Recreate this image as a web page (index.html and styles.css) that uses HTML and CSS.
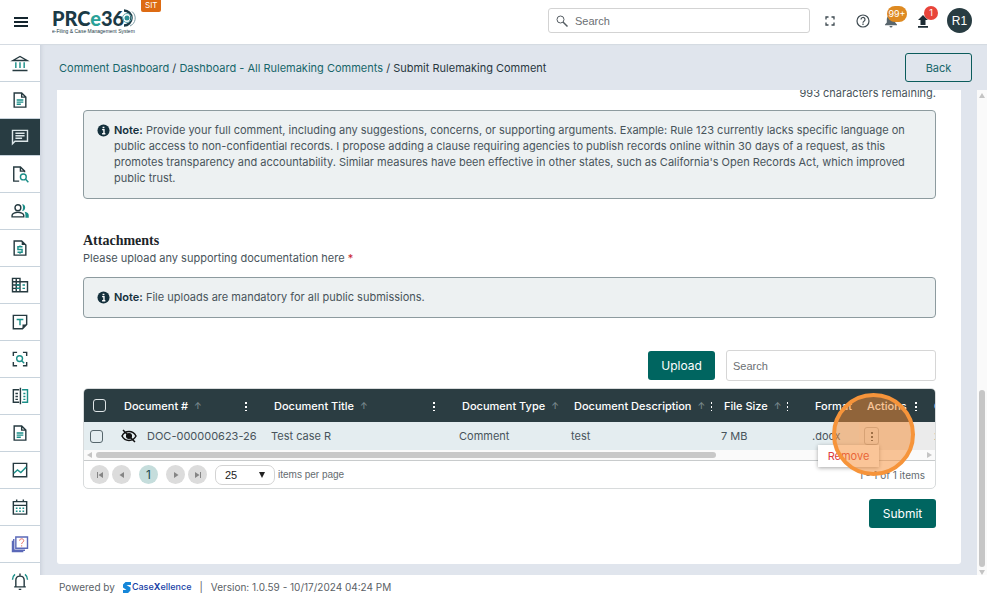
FILE: index.html
```
<!DOCTYPE html>
<html lang="en">
<head>
    <meta charset="UTF-8">
    <meta name="viewport" content="width=device-width, initial-scale=1.0">
    <title>Submit Rulemaking Comment</title>
    <link rel="stylesheet" href="styles.css">
</head>
<body>
    <header class="topbar">
        <button class="icon-btn menu-btn" aria-label="Menu">
            <svg width="14" height="12" viewBox="0 0 14 12"><path d="M0 2h14M0 6h14M0 10h14" stroke="#14252e" stroke-width="2"/></svg>
        </button>
        <a href="#" class="logo" aria-label="PRCe360 home">
            <svg width="84" height="36" viewBox="0 0 84 36">
                <text class="logo-name" x="0" y="22"><tspan>PRC</tspan><tspan class="logo-e">e</tspan><tspan>36</tspan></text>
                <g fill="none">
                    <path d="M72 6.500a7.500 7.500 0 1 1 0 15" stroke="#1b3a46" stroke-width="2.500"/>
                    <path d="M80 7.500a8.500 8.500 0 0 1-2 14.500" stroke="#7d9ca5" stroke-width="1"/>
                    <circle cx="75" cy="14" r="4.500" stroke="#5fa7ad" stroke-width="1"/>
                </g>
                <circle cx="75" cy="14" r="2.500" fill="#2b8f95"/>
                <text class="logo-sub" x="0" y="29">e-Filing &amp; Case Management System</text>
            </svg>
        </a>
        <span class="env">SIT</span>
        <label class="top-search">
            <svg width="12" height="12" viewBox="0 0 12 12" fill="none" stroke="#555d63"><circle cx="4.500" cy="4.500" r="3.500"/><path d="M7 7l4.500 4.500" stroke-width="1.500"/></svg>
            <input type="text" placeholder="Search" aria-label="Search">
        </label>
        <div class="tools">
            <button class="icon-btn" aria-label="Full screen">
                <svg width="10" height="10" viewBox="0 0 10 10" fill="none" stroke="#3f4b52" stroke-width="1.300"><path d="M1 3.500V1h2.500M6.500 1H9v2.500M9 6.500V9H6.500M3.500 9H1V6.500"/></svg>
            </button>
            <button class="icon-btn" aria-label="Help">
                <svg width="14" height="14" viewBox="0 0 14 14" fill="none" stroke="#3f4b52" stroke-width="1.200"><circle cx="7" cy="7" r="6"/><path d="M5 5.500a2 2 0 1 1 3 1.700c-.7.4-1 .7-1 1.500M7 9.500v1.500"/></svg>
            </button>
            <button class="icon-btn" aria-label="Notifications">
                <svg width="12" height="14" viewBox="0 0 12 14" fill="#59666d"><path d="M6 0a1 1 0 0 1 1 1.200c2 .5 3.200 2.200 3.200 4.300v3L12 10.500v.7H0v-.7l1.800-2v-3C1.800 3.400 3 1.700 5 1.200A1 1 0 0 1 6 0zM4.500 12h3a1.500 1.500 0 0 1-3 0z"/></svg>
                <span class="count count-orange">99+</span>
            </button>
            <button class="icon-btn" aria-label="Uploads">
                <svg width="12" height="14" viewBox="0 0 12 14" fill="#1c2b33"><path d="M6 1l5 5H8.500v5h-5V6H1zM1 12h10v1.700H1z"/></svg>
                <span class="count count-red">1</span>
            </button>
            <button class="avatar">R1</button>
        </div>
    </header>

    <div class="shell">
        <nav class="sidebar">
            <a href="#" aria-label="Home"><svg viewBox="0 0 24 24"><path class="d" d="M3.500 9L12 4.200 20.500 9zM3 21h18"/><path class="g" d="M7 11v7M12 11v7M17 11v7"/></svg></a>
            <a href="#" aria-label="Filings"><svg viewBox="0 0 24 24"><path class="d" d="M5 3.500h9l5 5v12H5zM14 3.500v5h5"/><path class="g" d="M8 12h8M8 14.500h8M8 17h5"/></svg></a>
            <a href="#" class="active" aria-label="Comments"><svg viewBox="0 0 24 24"><path d="M3 20V4h18v13H6z"/><path d="M6.500 7.500h11M6.500 10.500h11M6.500 13.500h8"/></svg></a>
            <a href="#" aria-label="Search documents"><svg viewBox="0 0 24 24"><path class="d" d="M11 20.500H4.500v-17h8l5 5V10M12.500 3.500v5h5"/><circle class="g" cx="16" cy="15.500" r="3.500"/><path class="g" d="M18.500 18l3.500 4"/></svg></a>
            <a href="#" aria-label="People"><svg viewBox="0 0 24 24"><circle class="d" cx="9.500" cy="8" r="3.500"/><path class="d" d="M2.500 19v-2c0-2 4-3.500 7-3.500s7 1.500 7 3.500v2z"/><path class="gf" d="M14.500 4c5 0 5 8 0 8 1.500-2 1.500-6 0-8zM17.500 13c3.500.7 5 2.200 5 4v3h-4v-3c0-1.700-.3-3-1-4z"/></svg></a>
            <a href="#" aria-label="Payments"><svg viewBox="0 0 24 24"><path class="d" d="M5 3.500h9l5 5v12H5z"/><path class="df" d="M14 3.500v5h5z"/><path class="g" d="M15 10.500H9.500v3.200h5V17H9M12 9v1.500M12 17v2"/></svg></a>
            <a href="#" aria-label="Companies"><svg viewBox="0 0 24 24"><path class="d" d="M3 4h9v16H3zM3 8h9M3 12h9M3 16h9M7.500 4v16M12 8h9v12h-9"/><path class="g" d="M7.500 12H12M7.500 16H12M15 12h3M15 16h3"/></svg></a>
            <a href="#" aria-label="Templates"><svg viewBox="0 0 24 24"><path class="d" d="M4 4h16v11l-5 5H4z"/><path class="df" d="M20 15h-5v5z"/><path class="g" d="M8 9h8M12 9v7"/></svg></a>
            <a href="#" aria-label="Scan"><svg viewBox="0 0 24 24"><path class="d" d="M4 8.500V4h4.500M15.500 4H20v4.500M20 15.500V20h-4.500M8.500 20H4v-4.500"/><circle class="g" cx="11.500" cy="11.500" r="3.500"/><path class="g" d="M14 14l3 3"/></svg></a>
            <a href="#" aria-label="Compare"><svg viewBox="0 0 24 24"><path class="d" d="M11 4.500H4v15h7M12.500 2v20M6.500 9h3M6.500 12.500h3M6.500 16h3"/><path class="g" d="M14.500 4.500H21v15h-6.500M16 9h2.500M16 12.500h2.500M16 16h2.500"/></svg></a>
            <a href="#" aria-label="Orders"><svg viewBox="0 0 24 24"><path class="d" d="M5 3.500h9l5 5v12H5zM14 3.500v5h5"/><path class="g" d="M8 12h8M8 14.500h8M8 17h5"/></svg></a>
            <a href="#" aria-label="Reports"><svg viewBox="0 0 24 24"><path class="d" d="M4 4h16v16H4z"/><path class="g" d="M4.500 16l4.500-4 4 3 6.500-6.500"/></svg></a>
            <a href="#" aria-label="Calendar"><svg viewBox="0 0 24 24"><path class="d" d="M4 5.500h16v15H4zM4 10h16M8 3v3M16 3v3"/><path class="g" stroke-dasharray="2 2" d="M7 13.500h11M7 17h11"/></svg></a>
            <a href="#" aria-label="Help topics"><svg viewBox="0 0 24 24"><path class="b" d="M7 3.500h14V17H7zM4.500 6v13.500H18M3 8v13h13"/><path class="r" d="M11.500 8c0-3 5-3 5 0 0 2-2.500 1.500-2.500 4M14 13.500V15"/></svg></a>
            <a href="#" aria-label="Alerts"><svg viewBox="0 0 24 24"><path class="d" d="M5 19h14M7 19v-8c0-6.500 10-6.500 10 0v8M12 3v3M10.500 22h3"/><path class="g" d="M6 4C4 5.500 3 7.500 3 10.500M18 4c2 1.500 3 3.500 3 6.500"/></svg></a>
        </nav>

        <main class="main">
            <div class="crumb-bar">
                <div class="crumbs">
                    <a href="#">Comment Dashboard</a> / <a href="#">Dashboard - All Rulemaking Comments</a> / <span>Submit Rulemaking Comment</span>
                </div>
                <button class="back-btn">Back</button>
            </div>

            <div class="scroll-area">
                <section class="panel">
                    <p class="remaining">993 characters remaining.</p>
                    <div class="note">
                        <svg class="info" viewBox="0 0 14 14"><circle cx="7" cy="7" r="6.500" fill="#14303c"/><path d="M5.500 6H7.500v4.500M5.500 10.500h3.500M6 3.800h2" stroke="#fff" stroke-width="1.500" fill="none"/></svg>
                        <p><b>Note:</b> Provide your full comment, including any suggestions, concerns, or supporting arguments. Example: Rule 123 currently lacks specific language on public access to non-confidential records. I propose adding a clause requiring agencies to publish records online within 30 days of a request, as this promotes transparency and accountability. Similar measures have been effective in other states, such as California's Open Records Act, which improved public trust.</p>
                    </div>

                    <h2>Attachments</h2>
                    <p class="hint">Please upload any supporting documentation here <span class="req">*</span></p>
                    <div class="note">
                        <svg class="info" viewBox="0 0 14 14"><circle cx="7" cy="7" r="6.500" fill="#14303c"/><path d="M5.500 6H7.500v4.500M5.500 10.500h3.500M6 3.800h2" stroke="#fff" stroke-width="1.500" fill="none"/></svg>
                        <p><b>Note:</b> File uploads are mandatory for all public submissions.</p>
                    </div>

                    <div class="grid-tools">
                        <button class="primary">Upload</button>
                        <input class="grid-search" type="text" placeholder="Search" aria-label="Search documents">
                    </div>

                    <div class="grid-wrap">
                        <div class="grid">
                            <table>
                                <colgroup>
                                    <col class="c-check"><col class="c-doc"><col class="c-title"><col class="c-type"><col class="c-desc"><col class="c-size"><col class="c-format"><col class="c-actions"><col>
                                </colgroup>
                                <thead>
                                    <tr>
                                        <th><input type="checkbox" aria-label="Select all"></th>
                                        <th><div class="head">Document # <i class="sort">↑</i><i class="dots"></i></div></th>
                                        <th><div class="head">Document Title <i class="sort">↑</i><i class="dots"></i></div></th>
                                        <th><div class="head tight">Document Type <i class="sort">↑</i><i class="dots"></i></div></th>
                                        <th><div class="head tight">Document Description <i class="sort">↑</i><i class="dots"></i></div></th>
                                        <th><div class="head">File Size <i class="sort">↑</i><i class="dots"></i></div></th>
                                        <th><div class="head">Format</div></th>
                                        <th><div class="head act">Actions <i class="dots"></i></div></th>
                                        <th><div class="head act">C</div></th>
                                    </tr>
                                </thead>
                                <tbody>
                                    <tr>
                                        <td><input type="checkbox" aria-label="Select document"></td>
                                        <td><div class="doc"><svg width="16" height="14" viewBox="0 0 16 14" fill="none" stroke="#111" stroke-width="1.500"><path d="M1 7c3-6 11-6 14 0-3 6-11 6-14 0z"/><circle cx="8" cy="7" r="2.300" fill="#111"/><path d="M2 1l12 12"/></svg>DOC-000000623-26</div></td>
                                        <td>Test case R</td>
                                        <td>Comment</td>
                                        <td>test</td>
                                        <td>7 MB</td>
                                        <td>.docx</td>
                                        <td class="sticky"><button class="row-menu" aria-label="Row actions"><i class="dots"></i></button></td>
                                        <td class="sticky">2</td>
                                    </tr>
                                </tbody>
                            </table>
                            <div class="hbar"><i class="arrow-left"></i><div class="htrack"><div class="hthumb"></div></div><i class="arrow-right"></i></div>
                            <div class="pager">
                                <button class="round" aria-label="First page"><svg viewBox="0 0 8 8"><path d="M1 1h1v6H1zM7 1v6L2.500 4z"/></svg></button>
                                <button class="round" aria-label="Previous page"><svg viewBox="0 0 8 8"><path d="M6 1v6L1.500 4z"/></svg></button>
                                <button class="round current">1</button>
                                <button class="round" aria-label="Next page"><svg viewBox="0 0 8 8"><path d="M2 1v6l4.500-3z"/></svg></button>
                                <button class="round" aria-label="Last page"><svg viewBox="0 0 8 8"><path d="M6 1h1v6H6zM1 1v6l4.500-3z"/></svg></button>
                                <span class="size-box">
                                    <select id="page-size"><option>25</option></select>
                                    <i class="caret"></i>
                                </span>
                                <label for="page-size">items per page</label>
                                <span class="total">1 - 1 of 1 items</span>
                            </div>
                        </div>
                        <button class="popup">Remove</button>
                        <div class="highlight"></div>
                    </div>

                    <div class="submit-row"><button class="primary">Submit</button></div>
                </section>

                <div class="vbar"><i class="arrow-up"></i><div class="vtrack"><div class="vthumb"></div></div><i class="arrow-down"></i></div>
            </div>

            <footer class="footer">
                <span>Powered by</span>
                <a href="#" class="brand"><svg width="8" height="11" viewBox="0 0 8 11"><path d="M8 0v3H3.500l4 2.500v3L5 11H0V8h3.500L0 5.500v-3L2.500 0z" fill="#1687d9"/></svg>Case<b>X</b>ellence</a>
                <span>|</span>
                <span>Version: 1.0.59 - 10/17/2024 04:24 PM</span>
            </footer>
        </main>
    </div>
</body>
</html>
```
FILE: styles.css
```
* {
    box-sizing: border-box;
}
body {
    margin: 0;
    height: 100vh;
    display: flex;
    flex-direction: column;
    overflow: hidden;
    background: #fff;
    color: #48545b;
    font-family: Inter, "Open Sans", sans-serif;
    font-size: 11px;
    line-height: 16px;
}
p, h2 {
    margin: 0;
}
button, input, select {
    font-family: inherit;
    font-size: inherit;
    color: inherit;
}
button {
    padding: 0;
    cursor: pointer;
}
a {
    color: #17656a;
    text-decoration: none;
}
svg {
    display: block;
    flex: none;
}

/* top bar */
.topbar {
    display: flex;
    align-items: flex-start;
    flex: none;
    height: 45px;
    padding: 0 15px 0 14px;
    border-bottom: 1px solid #d5dbe2;
}
.icon-btn {
    position: relative;
    border: 0;
    background: none;
}
.menu-btn {
    margin: 16px 24px 0 0;
}
.logo {
    margin-top: 4px;
}
.logo-name {
    font-family: Lato, sans-serif;
    font-size: 20px;
    font-weight: 900;
    fill: #1b3a46;
}
.logo-e {
    fill: #2aa198;
}
.logo-sub {
    font-family: "Liberation Sans", sans-serif;
    font-size: 5px;
    fill: #1b3a46;
}
.env {
    height: 12px;
    margin-left: 5px;
    padding: 0 4px;
    border-radius: 0 0 2px 2px;
    background: #dd6b13;
    color: #fff;
    font-size: 8px;
    line-height: 11px;
}
.top-search {
    display: flex;
    align-items: center;
    width: 262px;
    height: 25px;
    margin: 8px 15px 0 auto;
    padding: 0 7px;
    gap: 7px;
    border: 1px solid #d3d3d3;
    border-radius: 3px;
}
.top-search input {
    flex: 1;
    min-width: 0;
    padding: 0;
    border: 0;
    outline: 0;
    background: none;
}
input[type="text"] {
    font-family: "Liberation Sans", sans-serif;
}
input::placeholder {
    color: #6b6f73;
    opacity: 1;
}
.tools {
    display: flex;
    align-items: center;
    height: 41px;
}
.tools .icon-btn {
    margin-right: 20px;
}
.tools .icon-btn:nth-child(2) {
    margin-right: 15px;
}
.tools .icon-btn:nth-child(4) {
    margin-right: 18px;
}
.tools .icon-btn:first-child {
    margin-right: 21px;
}
.count {
    position: absolute;
    top: -8px;
    min-width: 14px;
    height: 14px;
    border-radius: 8px;
    color: #fff;
    font-size: 9px;
    line-height: 14px;
    text-align: center;
}
.count-orange {
    left: 2px;
    width: 20px;
    height: 16px;
    line-height: 16px;
    background: #de8a22;
}
.count-red {
    left: 7px;
    background: #e8443a;
}
.avatar {
    width: 25px;
    height: 25px;
    border: 0;
    border-radius: 50%;
    background: #283c42;
    color: #fff;
    font-family: "Liberation Sans", sans-serif;
    font-size: 12px;
}

/* side navigation */
.shell {
    display: flex;
    flex: 1;
    min-height: 0;
}
.sidebar {
    flex: none;
    width: 40px;
    overflow: hidden;
}
.sidebar a {
    display: flex;
    align-items: center;
    justify-content: center;
    height: 37px;
    border-bottom: 1px solid #c8d3dc;
}
.sidebar svg {
    width: 20px;
    height: 20px;
    fill: none;
    stroke: #dce6e8;
    stroke-width: 1.700;
}
.sidebar .active {
    background: #283c42;
}
.sidebar .d {
    stroke: #263a40;
}
.sidebar .df {
    fill: #263a40;
    stroke: none;
}
.sidebar .g {
    stroke: #1b8f89;
}
.sidebar .gf {
    fill: #1b8f89;
    stroke: none;
}
.sidebar .b {
    stroke: #5a68b8;
}
.sidebar .r {
    stroke: #e2584c;
    stroke-width: 1;
}

.main {
    display: flex;
    flex-direction: column;
    flex: 1;
    min-width: 0;
    background: #e0e5ed;
    box-shadow: inset 4px 0 4px -3px #c5ccd6;
}
.crumb-bar {
    display: flex;
    align-items: center;
    justify-content: space-between;
    flex: none;
    height: 45px;
    padding: 0 15px 0 19px;
}
.crumbs {
    color: #28383f;
}
.back-btn {
    width: 67px;
    height: 29px;
    border: 1px solid #0b5c5c;
    border-radius: 3px;
    background: none;
    color: #17656a;
    font-size: 11px;
}
.scroll-area {
    display: flex;
    justify-content: space-between;
    flex: 1;
    min-height: 0;
    padding-left: 17px;
    gap: 16px;
}
.panel {
    flex: 1;
    min-width: 0;
    margin-bottom: 11px;
    padding: 0 25px 0 26px;
    overflow: hidden;
    border-radius: 0 0 3px 3px;
    background: #fff;
}
.remaining {
    margin-top: -5px;
    text-align: right;
}
.note {
    display: flex;
    gap: 4px;
    margin-top: 9px;
    padding: 11px 14px 12px 13px;
    border: 1px solid #8d9b9f;
    border-radius: 4px;
    background: #edf1f2;
}
.note b {
    color: #14303c;
    font-weight: 600;
}
.info {
    width: 13px;
    height: 13px;
    margin-top: 2px;
}
h2 {
    margin-top: 33px;
    color: #1c2529;
    font-family: "Liberation Serif", serif;
    font-size: 14px;
    line-height: 18px;
}
.hint + .note {
    margin-top: 11px;
}
.req {
    color: #c9252d;
}
.grid-tools {
    display: flex;
    align-items: center;
    justify-content: flex-end;
    gap: 11px;
    margin-top: 32px;
}
.primary {
    min-width: 67px;
    height: 29px;
    border: 0;
    border-radius: 3px;
    background: #006560;
    color: #fff;
    font-size: 12px;
}
.grid-search {
    width: 210px;
    height: 31px;
    padding: 0 6px;
    border: 1px solid #d6d6d6;
    border-radius: 3px;
}

/* documents grid */
.grid-wrap {
    position: relative;
    margin-top: 7px;
}
.grid {
    overflow: hidden;
    border: 1px solid #d8dbdc;
    border-radius: 5px;
}
table {
    width: 100%;
    table-layout: fixed;
    border-collapse: collapse;
}
.c-check { width: 29px; }
.c-doc { width: 150px; }
.c-title { width: 188px; }
.c-type { width: 112px; }
.c-desc { width: 150px; }
.c-size { width: 91px; }
.c-format { width: 55px; }
.c-actions { width: 67px; }
th {
    height: 33px;
    padding: 0;
    background: #2b3d42;
    color: #fff;
    font-weight: 500;
    white-space: nowrap;
}
.head {
    display: flex;
    align-items: center;
    gap: 6px;
    padding: 0 16px 0 11px;
    overflow: hidden;
}
.head.tight {
    padding-right: 1px;
}
.head.act {
    padding: 0 9px 0 8px;
}
.sort {
    color: #7e8d91;
    font-size: 9px;
    font-style: normal;
}
.dots {
    width: 2px;
    height: 10px;
    margin-left: auto;
    background: radial-gradient(circle, currentColor 1px, transparent 1px) 0 0 / 2px 4px;
}
td {
    height: 28px;
    padding: 0 8px;
    background: #e4edf0;
    white-space: nowrap;
}
td:first-child, th:first-child {
    padding: 0 0 0 6px;
    text-align: left;
}
th:first-child {
    padding-left: 9px;
}
td.sticky {
    padding: 0 8px 0 5px;
    background: #ebebeb;
}
td.sticky:last-child {
    padding-left: 8px;
}
input[type="checkbox"] {
    appearance: none;
    display: block;
    width: 13px;
    height: 13px;
    margin: 0;
    border: 1px solid #56666c;
    border-radius: 3px;
}
th input[type="checkbox"] {
    border-color: #dfe5e7;
}
.doc {
    display: flex;
    align-items: center;
    gap: 10px;
}
.row-menu {
    display: flex;
    align-items: center;
    justify-content: center;
    width: 15px;
    height: 18px;
    border: 1px solid #b9b9b9;
    border-radius: 3px;
    background: none;
}
.row-menu .dots {
    margin: 0;
}
.hbar {
    display: flex;
    align-items: center;
    height: 10px;
    padding: 0 3px;
    gap: 4px;
    background: #fafafa;
}
.htrack {
    flex: 1;
}
.hthumb {
    width: 75%;
    height: 6px;
    border-radius: 3px;
    background: #c8c8c8;
}
.arrow-left, .arrow-right {
    border: 3px solid transparent;
    border-right: 5px solid #c4c4c4;
    border-left: 0;
}
.arrow-right {
    border-left: 5px solid #c4c4c4;
    border-right: 0;
}
.pager {
    display: flex;
    align-items: center;
    height: 28px;
    padding: 0 10px 0 6px;
    gap: 3px;
    border-top: 1px solid #c8cbcc;
    color: #646b6f;
    font-size: 10px;
}
.round {
    display: flex;
    align-items: center;
    justify-content: center;
    width: 19px;
    height: 19px;
    border: 0;
    border-radius: 50%;
    background: #dcdcdc;
}
.round svg {
    width: 8px;
    height: 8px;
    fill: #858585;
}
.round.current {
    margin: 0 5px;
    background: #c5dddc;
    color: #1c4c4e;
    font-size: 12px;
}
.size-box {
    position: relative;
    margin-left: 5px;
}
.size-box select {
    appearance: none;
    display: block;
    width: 60px;
    height: 20px;
    padding: 0 9px;
    border: 1px solid #d3d3d3;
    border-radius: 7px;
    background: #fff;
    color: #222;
    font-family: "Liberation Sans", sans-serif;
    font-size: 11px;
}
.caret {
    position: absolute;
    top: 7px;
    right: 10px;
    border: 3px solid transparent;
    border-top: 6px solid #222;
    border-bottom: 0;
    pointer-events: none;
}
.pager label {
    font-family: "Liberation Sans", sans-serif;
}
.total {
    margin-left: auto;
}
.popup {
    position: absolute;
    top: 57px;
    right: 57px;
    width: 61px;
    height: 22px;
    border: 0;
    background: #fff;
    box-shadow: 0 1px 4px rgba(0, 0, 0, 0.35);
    color: #dc3c3c;
}
.highlight {
    position: absolute;
    top: 5px;
    right: 21px;
    width: 83px;
    height: 83px;
    border: 4px solid #f6943a;
    border-radius: 50%;
    background: rgba(246, 140, 50, 0.5);
    pointer-events: none;
}
.submit-row {
    display: flex;
    justify-content: flex-end;
    margin-top: 10px;
}

.vbar {
    display: flex;
    flex-direction: column;
    align-items: center;
    width: 10px;
    padding: 3px 0 0;
    gap: 3px;
    background: #fafafa;
}
.vtrack {
    display: flex;
    flex-direction: column;
    justify-content: flex-end;
    flex: 1;
}
.vthumb {
    width: 6px;
    height: 38%;
    border-radius: 3px;
    background: #c6c6c6;
}
.arrow-up, .arrow-down {
    border: 3px solid transparent;
    border-bottom: 5px solid #c4c4c4;
    border-top: 0;
}
.arrow-down {
    border-top: 5px solid #c4c4c4;
    border-bottom: 0;
}

.footer {
    display: flex;
    align-items: center;
    flex: none;
    height: 24px;
    padding: 0 19px;
    gap: 8px;
    background: #fff;
    color: #5a6166;
    font-size: 10px;
}
.brand {
    display: flex;
    align-items: center;
    color: #1741a6;
    font-size: 9px;
    font-weight: 500;
}
.brand svg {
    margin-right: 1px;
}
```
